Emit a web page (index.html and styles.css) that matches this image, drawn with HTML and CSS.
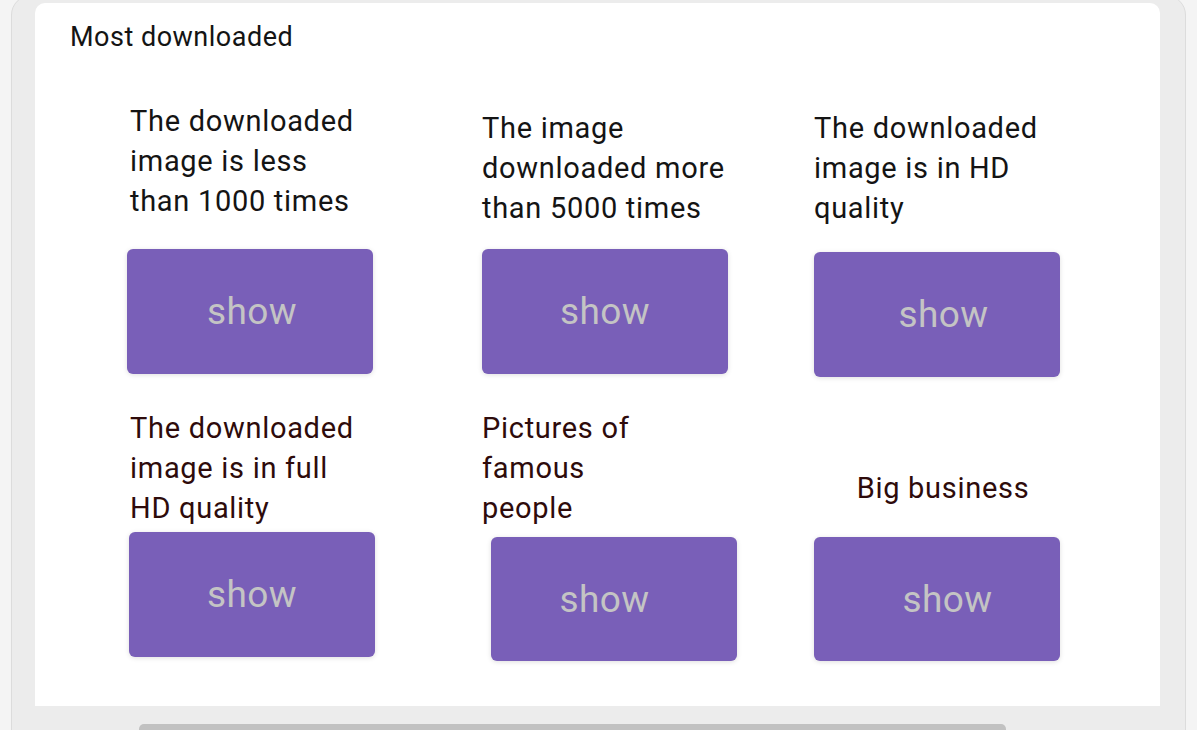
FILE: index.html
```html
<!DOCTYPE html>
<html>
<head>
<meta charset="utf-8">
<title>Most downloaded</title>
<link rel="stylesheet" href="styles.css">
</head>
<body>
<div class="frame">
  <div class="card">
    <div class="title">Most downloaded</div>
    <div class="grid">
      <div class="cell r1c1">
        <div class="label">The downloaded<br>image is less<br>than 1000 times</div>
        <button class="btn">show</button>
      </div>
      <div class="cell r1c2">
        <div class="label">The image<br>downloaded more<br>than 5000 times</div>
        <button class="btn">show</button>
      </div>
      <div class="cell r1c3">
        <div class="label">The downloaded<br>image is in HD<br>quality</div>
        <button class="btn">show</button>
      </div>
      <div class="cell r2c1">
        <div class="label dark">The downloaded<br>image is in full<br>HD quality</div>
        <button class="btn">show</button>
      </div>
      <div class="cell r2c2">
        <div class="label dark">Pictures of<br>famous<br>people</div>
        <button class="btn">show</button>
      </div>
      <div class="cell r2c3">
        <div class="label dark center">Big business</div>
        <button class="btn">show</button>
      </div>
    </div>
  </div>
  <div class="track"><div class="thumb"></div></div>
</div>
</body>
</html>
```
FILE: styles.css
```css
html, body {
  margin: 0;
  padding: 0;
  height: 730px;
  overflow: hidden;
  background: #f4f4f4;
  font-family: Roboto, "Liberation Sans", sans-serif;
}

.frame {
  box-sizing: border-box;
  margin: -5px 0 0 11px;
  width: 1175px;
  height: 760px;
  background: #ececec;
  border: 1px solid #dcdcdc;
  border-radius: 20px 20px 0 0;
  padding: 7px 25px 0 23px;
}

.card {
  box-sizing: border-box;
  width: 1125px;
  height: 703px;
  background: #ffffff;
  border-radius: 10px 10px 0 0;
  padding-top: 19px;
}

.title {
  padding-left: 35px;
  font-size: 27px;
  letter-spacing: 0.5px;
  line-height: 30px;
  color: #141414;
}

.grid {
  margin-top: 49px;
  padding-left: 92px;
  display: grid;
  grid-template-columns: 355px 332px 246px;
  row-gap: 31px;
  align-items: start;
}

.cell {
  display: flex;
  flex-direction: column;
  align-items: flex-start;
}

.label {
  font-size: 29px;
  letter-spacing: 0.7px;
  line-height: 40px;
  color: #141414;
  white-space: nowrap;
}

.label.dark {
  color: #2e0b0b;
}

.label.center {
  align-self: stretch;
  text-align: center;
  padding-left: 12px;
}

.btn {
  box-sizing: border-box;
  width: 246px;
  height: 125px;
  border: none;
  border-radius: 6px;
  background: #795fb8;
  color: #c4c4c4;
  font-family: Roboto, "Liberation Sans", sans-serif;
  font-size: 37px;
  letter-spacing: 0.4px;
  display: flex;
  align-items: center;
  justify-content: center;
  padding: 0;
  box-shadow: 0 1px 5px rgba(0, 0, 0, 0.13);
}

.r1c1 .label { padding-left: 3px; }
.r1c1 .btn { margin-top: 28px; padding-left: 4px; }

.r1c2 .label { margin-top: 7px; }
.r1c2 .btn { margin-top: 21px; }

.r1c3 .label { margin-top: 7px; }
.r1c3 .btn { margin-top: 24px; padding-left: 13px; }

.r2c1 .label { padding-left: 3px; }
.r2c1 .btn { margin-top: 4px; margin-left: 2px; }

.r2c2 .btn { margin-top: 9px; margin-left: 9px; height: 124px; padding-right: 19px; }

.r2c3 .label { margin-top: 60px; }
.r2c3 .btn { margin-top: 29px; height: 124px; padding-left: 21px; }

.track {
  margin-top: 18px;
  height: 20px;
}

.thumb {
  margin-left: 104px;
  width: 867px;
  height: 10px;
  background: #c1c1c1;
  border-radius: 5px 5px 0 0;
}
```
